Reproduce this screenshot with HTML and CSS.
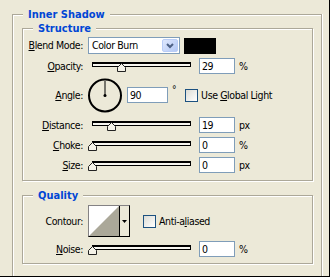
FILE: index.html
```html
<!DOCTYPE html>
<html lang="en">
<head>
    <meta charset="UTF-8">
    <title>Inner Shadow</title>
    <link rel="stylesheet" href="styles.css">
</head>
<body>
    <div class="group outer">
        <span class="group-title">Inner Shadow</span>

        <div class="group structure">
            <span class="group-title">Structure</span>

            <div class="row row-blend">
                <label class="lbl"><u>B</u>lend Mode:</label>
                <div class="select">
                    <span class="select-text">Color Burn</span>
                    <span class="select-btn">
                        <svg width="8" height="6" viewBox="0 0 8 6"><polyline points="1,1 4,4 7,1" fill="none" stroke="#4d6185" stroke-width="2"/></svg>
                    </span>
                </div>
                <div class="swatch"></div>
            </div>

            <div class="row">
                <label class="lbl"><u>O</u>pacity:</label>
                <div class="slider">
                    <div class="track"></div>
                    <svg class="thumb" style="left: 29px" width="9" height="9" viewBox="0 0 9 9"><polygon points="4.5,0.5 8.5,4.5 8.5,8.5 0.5,8.5 0.5,4.5" fill="#f4f2e8" stroke="#222"/></svg>
                </div>
                <div class="num">29</div>
                <span class="unit">%</span>
            </div>

            <div class="row row-angle">
                <label class="lbl"><u>A</u>ngle:</label>
                <svg class="dial" width="35" height="35" viewBox="0 0 35 35">
                    <circle cx="17" cy="17.5" r="16" fill="none" stroke="#000" stroke-width="2"/>
                    <line x1="17" y1="17.5" x2="17" y2="3" stroke="#000" stroke-width="1"/>
                    <circle cx="17" cy="17.5" r="1.5" fill="#000"/>
                </svg>
                <div class="num num-wide">90</div>
                <span class="degree">°</span>
                <span class="check"></span>
                <span class="check-label">Use <u>G</u>lobal Light</span>
            </div>

            <div class="row">
                <label class="lbl"><u>D</u>istance:</label>
                <div class="slider">
                    <div class="track"></div>
                    <svg class="thumb" style="left: 19px" width="9" height="9" viewBox="0 0 9 9"><polygon points="4.5,0.5 8.5,4.5 8.5,8.5 0.5,8.5 0.5,4.5" fill="#f4f2e8" stroke="#222"/></svg>
                </div>
                <div class="num">19</div>
                <span class="unit">px</span>
            </div>

            <div class="row">
                <label class="lbl"><u>C</u>hoke:</label>
                <div class="slider">
                    <div class="track"></div>
                    <svg class="thumb" style="left: 0px" width="9" height="9" viewBox="0 0 9 9"><polygon points="4.5,0.5 8.5,4.5 8.5,8.5 0.5,8.5 0.5,4.5" fill="#f4f2e8" stroke="#222"/></svg>
                </div>
                <div class="num">0</div>
                <span class="unit">%</span>
            </div>

            <div class="row">
                <label class="lbl"><u>S</u>ize:</label>
                <div class="slider">
                    <div class="track"></div>
                    <svg class="thumb" style="left: 0px" width="9" height="9" viewBox="0 0 9 9"><polygon points="4.5,0.5 8.5,4.5 8.5,8.5 0.5,8.5 0.5,4.5" fill="#f4f2e8" stroke="#222"/></svg>
                </div>
                <div class="num">0</div>
                <span class="unit">px</span>
            </div>
        </div>

        <div class="group quality">
            <span class="group-title">Quality</span>

            <div class="row row-contour">
                <label class="lbl">Contour:</label>
                <div class="contour">
                    <svg class="contour-img" width="31" height="30" viewBox="0 0 31 30" preserveAspectRatio="none"><polygon points="0,30 31,0 31,30" fill="#aba899"/></svg>
                    <span class="contour-btn">
                        <svg width="5" height="3" viewBox="0 0 5 3"><polygon points="0,0 5,0 2.5,3" fill="#000"/></svg>
                    </span>
                </div>
                <span class="check check-aa"></span>
                <span class="check-label">Anti-a<u>l</u>iased</span>
            </div>

            <div class="row">
                <label class="lbl"><u>N</u>oise:</label>
                <div class="slider">
                    <div class="track"></div>
                    <svg class="thumb" style="left: 0px" width="9" height="9" viewBox="0 0 9 9"><polygon points="4.5,0.5 8.5,4.5 8.5,8.5 0.5,8.5 0.5,4.5" fill="#f4f2e8" stroke="#222"/></svg>
                </div>
                <div class="num">0</div>
                <span class="unit">%</span>
            </div>
        </div>
    </div>
</body>
</html>
```

FILE: styles.css
```css
* {
    margin: 0;
    padding: 0;
    box-sizing: border-box;
}

body {
    width: 330px;
    height: 277px;
    overflow: hidden;
    background: #ece9d8;
    border-right: 1px solid #000;
    border-bottom: 1px solid #000;
    font-family: 'DejaVu Sans Condensed', 'DejaVu Sans', sans-serif;
    font-size: 10.5px;
    letter-spacing: -0.4px;
    color: #000;
}

/* Etched group boxes */
.group {
    position: relative;
    border: 1px solid #aca899;
    box-shadow: inset 1px 1px 0 #fff, 1px 1px 0 #fff;
}

.group-title {
    position: absolute;
    top: -7px;
    left: 10px;
    padding: 0 5px;
    background: #ece9d8;
    color: #0046d5;
    font-size: 11px;
    font-weight: bold;
    letter-spacing: 0;
    line-height: 13px;
}

/* the outer box runs off the bottom of the panel */
.outer {
    margin: 14px 0 0 12px;
    width: 310px;
    height: 262px;
    border-bottom: none;
    box-shadow: inset 1px 1px 0 #fff, 1px 0 0 #fff;
}

.structure {
    margin: 13px 0 0 9px;
    width: 291px;
    padding: 8px 0 7px;
}

.quality {
    margin: 14px 0 0 9px;
    width: 291px;
    padding: 9px 0 6px;
}

/* Rows */
.row {
    display: flex;
    align-items: center;
    height: 16px;
    margin-top: 4px;
}

.structure .row:first-of-type,
.quality .row:first-of-type {
    margin-top: 0;
}

.lbl {
    width: 60px;
    margin-right: 5px;
    text-align: right;
    flex-shrink: 0;
    white-space: nowrap;
}

.row-blend {
    height: 17px;
    align-items: flex-start;
}

.row-blend .lbl {
    line-height: 17px;
}

.row-angle {
    height: 36px;
    margin-top: 3px;
}

.row-contour {
    height: 32px;
}

/* Blend mode combo */
.select {
    display: flex;
    width: 92px;
    height: 17px;
    border: 1px solid #7f9db9;
    background: #fff;
}

.select-text {
    flex: 1;
    padding-left: 3px;
    line-height: 15px;
}

.select-btn {
    display: flex;
    align-items: center;
    justify-content: center;
    width: 16px;
    margin: 1px;
    border: 1px solid #b9cdf7;
    border-radius: 2px;
    background: linear-gradient(135deg, #dfe8fd, #b3c8f5);
}

.swatch {
    width: 32px;
    height: 16px;
    margin: 1px 0 0 4px;
    background: #000;
}

/* Sliders */
.slider {
    position: relative;
    width: 108px;
    height: 16px;
    margin-right: 3px;
    flex-shrink: 0;
}

.track {
    width: 99px;
    height: 5px;
    margin: 4px 0 0 4px;
    border: 1px solid #000;
    border-top-width: 2px;
    background: #f7f6f0;
}

.thumb {
    position: absolute;
    top: 5px;
}

.num {
    width: 36px;
    height: 16px;
    border: 1px solid #7f9db9;
    background: #fff;
    padding-left: 2px;
    line-height: 14px;
    flex-shrink: 0;
}

.num-wide {
    width: 41px;
}

.unit {
    margin-left: 4px;
}

/* Angle */
.dial {
    margin-right: 4px;
    flex-shrink: 0;
}

.degree {
    align-self: flex-start;
    margin: 8px 0 0 4px;
    font-size: 10px;
    line-height: 10px;
}

.check {
    width: 13px;
    height: 13px;
    margin-left: 9px;
    border: 1px solid #1c5180;
    background: linear-gradient(135deg, #dcdcd5, #fff);
    flex-shrink: 0;
}

.check-label {
    margin-left: 3px;
    white-space: nowrap;
}

.check-aa {
    margin-left: 13px;
}

/* Contour picker */
.contour {
    display: flex;
    width: 42px;
    height: 32px;
    border: 1px solid #000;
    border-left-color: #848284;
    border-top-color: #848284;
    background: #fff;
}

.contour-img {
    width: 31px;
    height: 30px;
    border-right: 1px solid #000;
}

.contour-btn {
    flex: 1;
    display: flex;
    align-items: center;
    justify-content: center;
    background: #ece9d8;
}
```
